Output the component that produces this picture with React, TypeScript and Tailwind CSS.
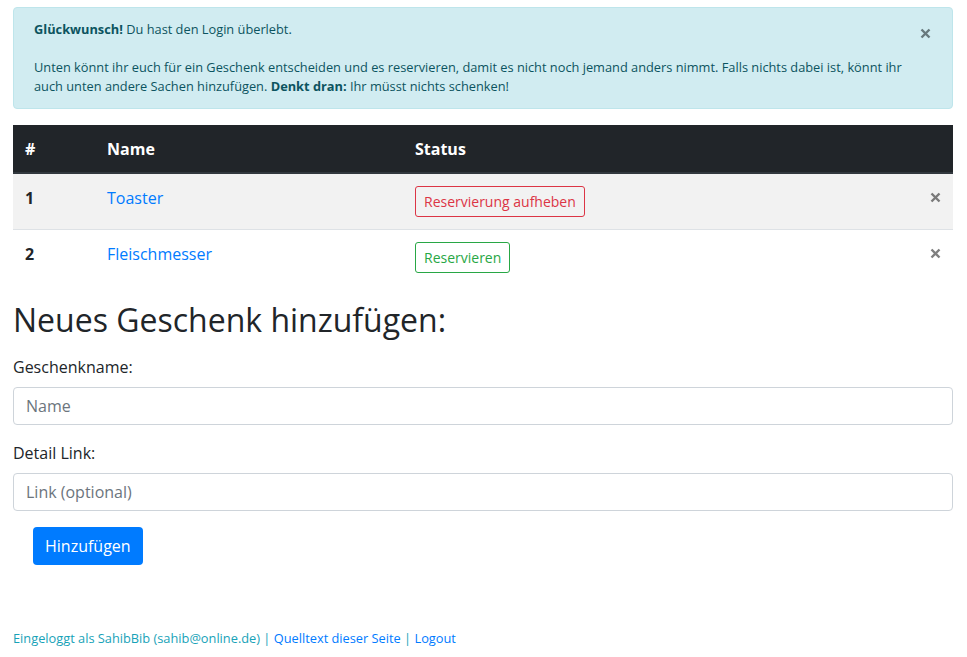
import React from "react";

function XIcon({ color, size = 11 }: { color: string; size?: number }) {
  return (
    <svg width={size} height={size} viewBox="0 0 11 11" fill="none">
      <path d="M1.5 1.5 L9.5 9.5 M9.5 1.5 L1.5 9.5" stroke={color} strokeWidth="2.4" strokeLinecap="butt" />
    </svg>
  );
}

export default function App() {
  return (
    <div
      className="min-h-[657px] w-full bg-white pl-[13px] pr-[14px] pt-[7px] text-[#212529]"
      style={{ fontFamily: '"Open Sans", "Noto Sans", sans-serif' }}
    >
      {/* Alert */}
      <div className="relative rounded-[4px] border border-[#bee5eb] bg-[#d1ecf1] px-5 pb-[12px] pt-[12px] text-[12.8px] leading-[19px] text-[#0c5460]">
        <div>
          <b className="font-bold">Glückwunsch!</b> Du hast den Login überlebt.
          <br />
          <br />
          Unten könnt ihr euch für ein Geschenk entscheiden und es reservieren, damit es nicht noch jemand anders nimmt. Falls
          nichts dabei ist, könnt ihr auch unten andere Sachen hinzufügen. <b className="font-bold">Denkt dran:</b> Ihr müsst
          nichts schenken!
        </div>
        <button className="absolute right-[21px] top-[19px] flex h-[12px] w-[12px] items-center justify-center">
          <XIcon color="#68797d" size={11} />
        </button>
      </div>

      {/* Table */}
      <div className="mt-[16px] text-[16px] leading-6">
        <div className="grid grid-cols-[82px_308px_1fr_auto] border-b-2 border-[#32383e] bg-[#212529] font-bold text-white">
          <div className="px-3 pb-[11px] pt-3">#</div>
          <div className="px-3 pb-[11px] pt-3">Name</div>
          <div className="px-3 pb-[11px] pt-3">Status</div>
          <div className="w-[35px] px-3 pb-[11px] pt-3"></div>
        </div>
        <div className="grid h-[55px] grid-cols-[82px_308px_1fr_auto] bg-[#f2f2f2]">
          <div className="px-3 pt-3 font-bold">1</div>
          <div className="px-3 pt-3">
            <a className="text-[#007bff]" href="#">
              Toaster
            </a>
          </div>
          <div className="px-3 pt-3">
            <button className="h-[31px] rounded-[3px] border border-[#dc3545] px-2 text-[14px] leading-[21px] text-[#dc3545]">
              Reservierung aufheben
            </button>
          </div>
          <div className="flex w-[35px] justify-end pr-3 pt-[18px]">
            <XIcon color="#7a7a7a" />
          </div>
        </div>
        <div className="grid h-[56px] grid-cols-[82px_308px_1fr_auto] border-t border-[#dee2e6]">
          <div className="px-3 pt-3 font-bold">2</div>
          <div className="px-3 pt-3">
            <a className="text-[#007bff]" href="#">
              Fleischmesser
            </a>
          </div>
          <div className="px-3 pt-3">
            <button className="h-[31px] rounded-[3px] border border-[#28a745] px-2 text-[14px] leading-[21px] text-[#28a745]">
              Reservieren
            </button>
          </div>
          <div className="flex w-[35px] justify-end pr-3 pt-[18px]">
            <XIcon color="#7f7f7f" />
          </div>
        </div>
      </div>

      {/* Form */}
      <h2 className="mt-[16px] text-[32px] font-normal leading-[38px]">Neues Geschenk hinzufügen:</h2>
      <div className="mt-4">
        <label className="block text-[16px] leading-6">Geschenkname:</label>
        <input
          className="mt-2 block h-[38px] w-full rounded-[4px] border border-[#ced4da] px-3 text-[16px] outline-none placeholder:text-[#6c757d]"
          placeholder="Name"
        />
      </div>
      <div className="mt-4">
        <label className="block text-[16px] leading-6">Detail Link:</label>
        <input
          className="mt-2 block h-[38px] w-full rounded-[4px] border border-[#ced4da] px-3 text-[16px] outline-none placeholder:text-[#6c757d]"
          placeholder="Link (optional)"
        />
      </div>
      <button className="ml-5 mt-4 h-[38px] rounded-[4px] bg-[#007bff] px-3 text-[16px] leading-6 text-white">Hinzufügen</button>

      {/* Footer */}
      <div className="mt-[64px] text-[12.8px] leading-[19.2px] text-[#17a2b8]">
        Eingeloggt als SahibBib (sahib@online.de) |{" "}
        <a className="text-[#007bff]" href="#">
          Quelltext dieser Seite
        </a>{" "}
        |{" "}
        <a className="text-[#007bff]" href="#">
          Logout
        </a>
      </div>
    </div>
  );
}
